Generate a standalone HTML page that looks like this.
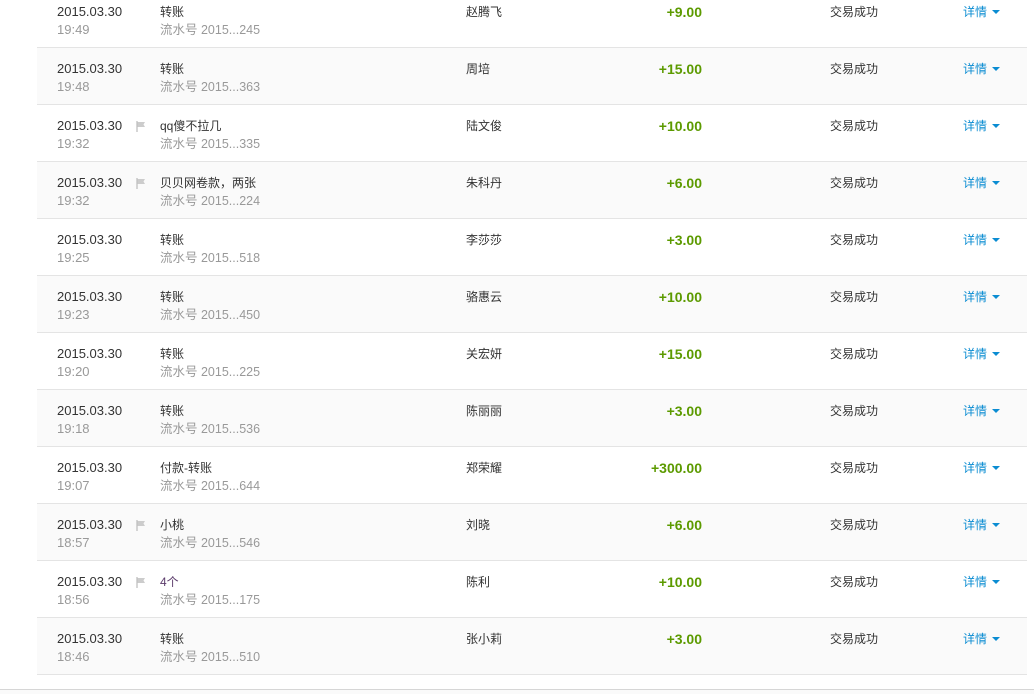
<!DOCTYPE html>
<html style="overflow:hidden"><head><meta charset="utf-8"><style>
html,body{margin:0;width:1034px;height:694px;overflow:hidden}
body{background:#fff;font-family:"Liberation Sans","Noto Sans CJK SC",sans-serif;font-size:12px;position:relative}
.r{position:absolute;left:37px;width:990px;height:56px;border-bottom:1px solid #e4e4e4}
.g{background:#fafafa}
.r div{position:absolute;white-space:nowrap;line-height:16px}
.d{left:20px;top:13px;color:#333;font-size:13px}
.t{left:20px;top:31px;color:#999;font-size:13px}
.n{left:123px;top:13px;color:#333}
.s{left:123px;top:31px;color:#999;font-size:12.5px}
.p{left:429px;top:13px;color:#333}
.a{right:325px;top:13px;color:#5c9a00;font-weight:bold;font-size:14px}
.st{left:793px;top:13px;color:#333}
.x{left:926px;top:13px;color:#0a8cd2}
.x:after{content:"";display:inline-block;margin-left:5px;border-left:4px solid transparent;border-right:4px solid transparent;border-top:4px solid #0a8cd2;vertical-align:2px}
.f{left:99px;top:15px;width:10px;height:11px}
.bot{position:absolute;left:0;top:689px;width:1034px;height:40px;background:#fafafa;border-top:1px solid #d6d6d6}
</style></head><body>
<div class="r" style="top:-9px"><div class="d">2015.03.30</div><div class="t">19:49</div><div class="n">转账</div><div class="s">流水号 2015...245</div><div class="p">赵腾飞</div><div class="a">+9.00</div><div class="st">交易成功</div><div class="x">详情</div></div>
<div class="r g" style="top:48px"><div class="d">2015.03.30</div><div class="t">19:48</div><div class="n">转账</div><div class="s">流水号 2015...363</div><div class="p">周培</div><div class="a">+15.00</div><div class="st">交易成功</div><div class="x">详情</div></div>
<div class="r" style="top:105px"><div class="d">2015.03.30</div><div class="t">19:32</div><div class="f"><svg width="10" height="11"><path d="M1 0V11" stroke="#bbb" stroke-width="1.2"/><path d="M1.5 1H9L7.5 3.5L9 6H1.5Z" fill="#ccc"/></svg></div><div class="n">qq傻不拉几</div><div class="s">流水号 2015...335</div><div class="p">陆文俊</div><div class="a">+10.00</div><div class="st">交易成功</div><div class="x">详情</div></div>
<div class="r g" style="top:162px"><div class="d">2015.03.30</div><div class="t">19:32</div><div class="f"><svg width="10" height="11"><path d="M1 0V11" stroke="#bbb" stroke-width="1.2"/><path d="M1.5 1H9L7.5 3.5L9 6H1.5Z" fill="#ccc"/></svg></div><div class="n">贝贝网卷款，两张</div><div class="s">流水号 2015...224</div><div class="p">朱科丹</div><div class="a">+6.00</div><div class="st">交易成功</div><div class="x">详情</div></div>
<div class="r" style="top:219px"><div class="d">2015.03.30</div><div class="t">19:25</div><div class="n">转账</div><div class="s">流水号 2015...518</div><div class="p">李莎莎</div><div class="a">+3.00</div><div class="st">交易成功</div><div class="x">详情</div></div>
<div class="r g" style="top:276px"><div class="d">2015.03.30</div><div class="t">19:23</div><div class="n">转账</div><div class="s">流水号 2015...450</div><div class="p">骆惠云</div><div class="a">+10.00</div><div class="st">交易成功</div><div class="x">详情</div></div>
<div class="r" style="top:333px"><div class="d">2015.03.30</div><div class="t">19:20</div><div class="n">转账</div><div class="s">流水号 2015...225</div><div class="p">关宏妍</div><div class="a">+15.00</div><div class="st">交易成功</div><div class="x">详情</div></div>
<div class="r g" style="top:390px"><div class="d">2015.03.30</div><div class="t">19:18</div><div class="n">转账</div><div class="s">流水号 2015...536</div><div class="p">陈丽丽</div><div class="a">+3.00</div><div class="st">交易成功</div><div class="x">详情</div></div>
<div class="r" style="top:447px"><div class="d">2015.03.30</div><div class="t">19:07</div><div class="n">付款-转账</div><div class="s">流水号 2015...644</div><div class="p">郑荣耀</div><div class="a">+300.00</div><div class="st">交易成功</div><div class="x">详情</div></div>
<div class="r g" style="top:504px"><div class="d">2015.03.30</div><div class="t">18:57</div><div class="f"><svg width="10" height="11"><path d="M1 0V11" stroke="#bbb" stroke-width="1.2"/><path d="M1.5 1H9L7.5 3.5L9 6H1.5Z" fill="#ccc"/></svg></div><div class="n">小桃</div><div class="s">流水号 2015...546</div><div class="p">刘晓</div><div class="a">+6.00</div><div class="st">交易成功</div><div class="x">详情</div></div>
<div class="r" style="top:561px"><div class="d">2015.03.30</div><div class="t">18:56</div><div class="f"><svg width="10" height="11"><path d="M1 0V11" stroke="#bbb" stroke-width="1.2"/><path d="M1.5 1H9L7.5 3.5L9 6H1.5Z" fill="#ccc"/></svg></div><div class="n" style="color:#5a3a6a">4个</div><div class="s">流水号 2015...175</div><div class="p">陈利</div><div class="a">+10.00</div><div class="st">交易成功</div><div class="x">详情</div></div>
<div class="r g" style="top:618px"><div class="d">2015.03.30</div><div class="t">18:46</div><div class="n">转账</div><div class="s">流水号 2015...510</div><div class="p">张小莉</div><div class="a">+3.00</div><div class="st">交易成功</div><div class="x">详情</div></div>
<div class="r" style="top:675px"><div class="d">2015.03.30</div><div class="n">转账</div><div class="p">张小莉</div><div class="st">交易成功</div></div>
<div class="bot"></div>
</body></html>
